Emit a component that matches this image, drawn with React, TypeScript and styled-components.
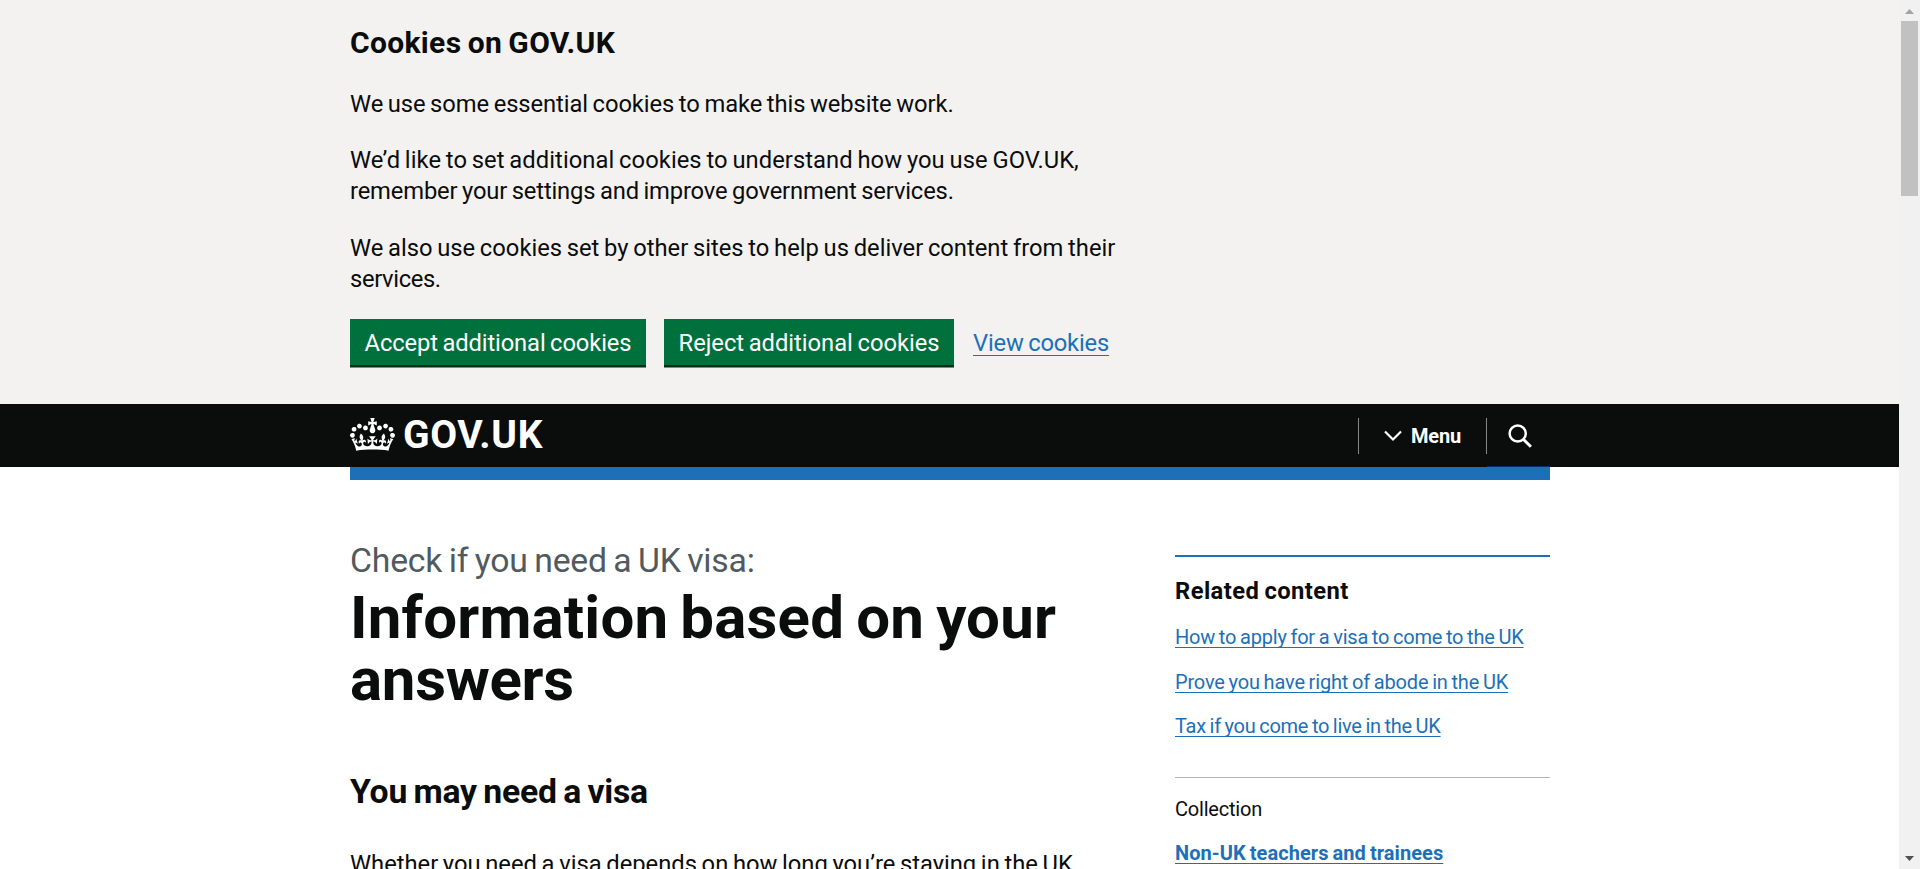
import React from "react";
import styled, { createGlobalStyle } from "styled-components";

const GlobalStyle = createGlobalStyle`
  *, *::before, *::after { box-sizing: border-box; }
  html, body { margin: 0; padding: 0; overflow: hidden; background: #fff; }
  body { font-family: Roboto, "Liberation Sans", sans-serif; color: #0b0c0c; word-spacing: -0.05em; }
  h1, h2, p, ul { margin: 0; padding: 0; }
`;

const Window = styled.div`
  display: flex;
  width: 1920px;
  height: 869px;
  overflow: hidden;
`;

const Page = styled.div`
  width: 1899px;
  height: 869px;
  overflow: hidden;
`;

const Container = styled.div`
  width: 1200px;
  margin-left: 350px;
`;

const Line = styled.span<{ $track: number }>`
  display: block;
  white-space: nowrap;
  letter-spacing: ${(p) => p.$track}px;
  word-spacing: -0.05em;
`;

const Banner = styled.section`
  height: 404px;
  padding-top: 24px;
  background: #f3f2f1;
`;

const BannerTitle = styled.h2`
  margin-bottom: 27.4px;
  font-size: 30px;
  line-height: 37.5px;
  font-weight: 700;
`;

const BodyText = styled.p`
  font-size: 23.75px;
  line-height: 31.25px;
`;

const BannerText = styled(BodyText)`
  margin-bottom: 25px;
`;

const ButtonGroup = styled.div`
  display: flex;
  align-items: flex-start;
  margin-top: -1.2px;
`;

const Button = styled.button<{ $width: number; $track: number }>`
  width: ${(p) => p.$width}px;
  height: 46px;
  margin: 0 18px 0 0;
  padding: 2px 0 0;
  border: 0;
  background: #00703c;
  box-shadow: 0 2.5px 0 #002d18;
  color: #fff;
  font-family: inherit;
  font-size: 23.75px;
  line-height: 44px;
  letter-spacing: ${(p) => p.$track}px;
  word-spacing: -0.05em;
  white-space: nowrap;
`;

const Link = styled.a<{ $track: number; $bold?: boolean }>`
  color: #1d70b8;
  font-weight: ${(p) => (p.$bold ? 700 : 400)};
  letter-spacing: ${(p) => p.$track}px;
  word-spacing: -0.05em;
  white-space: nowrap;
  text-decoration: underline;
  text-decoration-thickness: 1px;
  text-decoration-skip-ink: none;
  text-underline-offset: 3px;
`;

const BannerLink = styled(Link)`
  margin: 9px 0 0 1px;
  font-size: 23.75px;
  line-height: 31.25px;
  text-underline-offset: 4px;
`;

const Header = styled.header`
  height: 63px;
  background: #0b0c0c;
`;

const HeaderRow = styled(Container)`
  display: flex;
  justify-content: space-between;
  height: 63px;
`;

const Logo = styled.a`
  display: flex;
  align-items: flex-start;
  height: 63px;
  color: #fff;
`;

const Crown = styled.svg`
  width: 45px;
  height: 33px;
  margin-top: 14px;
  fill: #fff;
`;

const LogoText = styled.span`
  margin: 11px 0 0 8px;
  font-size: 39px;
  line-height: 40px;
  font-weight: 700;
  letter-spacing: 0.65px;
`;

const HeaderNav = styled.nav`
  display: flex;
  height: 63px;
`;

const Divider = styled.span`
  width: 1px;
  height: 36px;
  margin-top: 14px;
  background: #85888b;
`;

const MenuButton = styled.div`
  display: flex;
  align-items: center;
  gap: 9px;
  width: 127px;
  height: 63px;
  padding: 1px 0 0 25px;
  color: #fff;
  font-size: 20px;
  line-height: 24px;
  font-weight: 700;
  letter-spacing: -0.15px;
`;

const SearchButton = styled.div`
  width: 63px;
  height: 63px;
  padding: 20px 0 0 21px;
  border-bottom: 1px solid #003078;
`;

const StrokeIcon = styled.svg`
  display: block;
  fill: none;
  stroke: #fff;
`;

const BlueBar = styled(Container)`
  height: 13px;
  background: #1d70b8;
`;

const Main = styled(Container)`
  display: flex;
  justify-content: space-between;
`;

const Article = styled.main`
  width: 780px;
  padding-top: 60px;
`;

const Caption = styled.p`
  margin-bottom: 5.4px;
  color: #505a5f;
  font-size: 33.75px;
  line-height: 41.25px;
`;

const Title = styled.h1`
  margin-bottom: 59.6px;
  font-size: 60px;
  line-height: 62.5px;
  font-weight: 700;
`;

const Subtitle = styled.h2`
  margin-bottom: 36.15px;
  font-size: 33.75px;
  line-height: 42px;
  font-weight: 700;
`;

const Related = styled.aside`
  width: 375px;
  margin-top: 75px;
  padding-top: 19.3px;
  border-top: 2px solid #1d70b8;
  font-size: 20px;
  line-height: 25px;
`;

const RelatedTitle = styled.h2`
  margin-bottom: 17.85px;
  font-size: 23.75px;
  line-height: 31.25px;
  font-weight: 700;
`;

const LinkList = styled.ul`
  display: flex;
  flex-direction: column;
  gap: 19.2px;
  list-style: none;

  li { height: 25px; }
`;

const Collection = styled.section`
  margin-top: 38.2px;
  padding-top: 19.4px;
  border-top: 1px solid #b1b4b6;
`;

const CollectionLabel = styled.p`
  margin-bottom: 19px;
  letter-spacing: -0.2px;
`;

const Scrollbar = styled.div`
  display: flex;
  flex-direction: column;
  align-items: center;
  width: 21px;
  height: 869px;
  padding: 9px 0 8px;
  background: #f1f1f1;
`;

const Arrow = styled.svg<{ $color: string }>`
  display: block;
  width: 9px;
  height: 5px;
  fill: ${(p) => p.$color};
`;

const Thumb = styled.div`
  width: 17px;
  height: 175px;
  margin: 7px 0 auto;
  background: #c1c1c1;
`;

const relatedLinks = [
  { text: "How to apply for a visa to come to the UK", track: -0.2 },
  { text: "Prove you have right of abode in the UK", track: -0.17 },
  { text: "Tax if you come to live in the UK", track: -0.26 },
];

const crownPath =
  "M25 30.2c3.5 1.5 7.7-.2 9.1-3.7 1.5-3.6-.2-7.8-3.9-9.2-3.6-1.4-7.6.3-9.1 3.9-1.4 3.5.3 7.5 3.9 9zM9 39.5c3.6 1.5 7.8-.2 9.2-3.7 1.5-3.6-.2-7.8-3.9-9.1-3.6-1.5-7.6.2-9.1 3.8-1.4 3.5.3 7.5 3.8 9zM4.4 57.2c3.5 1.5 7.7-.2 9.1-3.8 1.5-3.6-.2-7.7-3.9-9.1-3.5-1.5-7.6.3-9.1 3.8-1.4 3.5.3 7.6 3.9 9.1zm38.3-21.4c3.5 1.5 7.7-.2 9.1-3.8 1.5-3.6-.2-7.7-3.9-9.1-3.6-1.5-7.6.3-9.1 3.8-1.3 3.6.4 7.7 3.9 9.1zm64.4-5.6c-3.6 1.5-7.8-.2-9.1-3.7-1.5-3.6.2-7.8 3.8-9.2 3.6-1.4 7.7.3 9.2 3.9 1.3 3.5-.4 7.5-3.9 9zm15.9 9.3c-3.6 1.5-7.7-.2-9.1-3.7-1.5-3.6.2-7.8 3.7-9.1 3.6-1.5 7.7.2 9.2 3.8 1.5 3.5-.3 7.5-3.8 9zm4.7 17.7c-3.6 1.5-7.8-.2-9.2-3.8-1.5-3.6.2-7.7 3.9-9.1 3.6-1.5 7.7.3 9.2 3.8 1.3 3.5-.4 7.6-3.9 9.1zM89.3 35.8c-3.6 1.5-7.8-.2-9.2-3.8-1.4-3.6.2-7.7 3.9-9.1 3.6-1.5 7.7.3 9.2 3.8 1.4 3.6-.3 7.7-3.9 9.1zM69.7 17.7l8.9 4.7V9.3l-8.9 2.8c-.2-.3-.5-.6-.9-.9L72.4 0H59.6l3.5 11.2c-.3.3-.6.5-.9.9l-8.8-2.8v13.1l8.8-4.7c.3.3.6.7.9.9l-5 15.4v.1c-.2.8-.4 1.6-.4 2.4 0 4.1 3.1 7.5 7 8.1h.2c.3 0 .7.1 1 .1.4 0 .7 0 1-.1h.2c4-.6 7.1-4.1 7.1-8.1 0-.8-.1-1.7-.4-2.4V34l-5.1-15.4c.4-.2.7-.6 1-.9zM66 92.8c16.9 0 32.8 1.1 47.1 3.2 4-16.9 8.9-26.7 14-33.5l-9.6-3.4c1 4.9 1.1 7.2 0 10.2-1.5-1.4-3-4.3-4.2-8.7L108.6 76c2.8-2 5-3.2 7.5-3.3-4.4 9.4-10 11.9-13.6 11.2-4.3-.8-6.3-4.6-5.6-7.9 1-4.7 5.7-5.9 8-.5 4.3-8.7-3-11.4-7.6-8.8 7.1-7.2 7.9-13.5 2.1-21.1-8 6.1-8.1 12.3-4.5 20.8-4.7-5.4-12.1-2.5-9.5 6.2 3.4-5.2 7.9-2 7.2 3.1-.6 4.3-6.4 7.8-13.5 7.2-10.3-.9-10.9-8-11.2-13.8 2.5-.5 7.1 1.8 11 7.3L80.2 60c-4.1 4.4-8 5.3-12.3 5.4 1.4-4.4 8-11.6 8-11.6H55.5s6.4 7.2 7.9 11.6c-4.2-.1-8-1-12.3-5.4l1.4 16.4c3.9-5.5 8.5-7.7 10.9-7.3-.3 5.8-.9 12.8-11.1 13.8-7.2.6-12.9-2.9-13.5-7.2-.7-5 3.8-8.3 7.1-3.1 2.7-8.7-4.6-11.6-9.4-6.2 3.7-8.5 3.6-14.7-4.6-20.8-5.8 7.6-5 13.9 2.2 21.1-4.7-2.6-11.9.1-7.7 8.8 2.3-5.5 7.1-4.2 8.1.5.7 3.3-1.3 7.1-5.7 7.9-3.5.7-9-1.8-13.5-11.2 2.5.1 4.7 1.3 7.5 3.3l-4.7-15.4c-1.2 4.4-2.7 7.2-4.3 8.7-1.1-3-.9-5.3 0-10.2l-9.5 3.4c5 6.9 9.9 16.7 14 33.5 14.8-2.1 30.8-3.2 47.7-3.2z";

export default function App() {
  return (
    <Window>
      <GlobalStyle />
      <Page>
        <Banner>
          <Container>
            <BannerTitle>
              <Line $track={0.33}>Cookies on GOV.UK</Line>
            </BannerTitle>
            <BannerText>
              <Line $track={-0.08}>We use some essential cookies to make this website work.</Line>
            </BannerText>
            <BannerText>
              <Line $track={0.06}>We’d like to set additional cookies to understand how you use GOV.UK,</Line>
              <Line $track={-0.15}>remember your settings and improve government services.</Line>
            </BannerText>
            <BannerText>
              <Line $track={0}>We also use cookies set by other sites to help us deliver content from their</Line>
              <Line $track={-0.35}>services.</Line>
            </BannerText>
            <ButtonGroup>
              <Button $width={296} $track={-0.13}>Accept additional cookies</Button>
              <Button $width={290} $track={-0.03}>Reject additional cookies</Button>
              <BannerLink $track={-0.18}>View cookies</BannerLink>
            </ButtonGroup>
          </Container>
        </Banner>

        <Header>
          <HeaderRow>
            <Logo>
              <Crown viewBox="0 0 132 97">
                <path d={crownPath} />
              </Crown>
              <LogoText>GOV.UK</LogoText>
            </Logo>
            <HeaderNav>
              <Divider />
              <MenuButton>
                <StrokeIcon width="18" height="12" viewBox="0 0 18 12" strokeWidth="2.2">
                  <path d="M1 1.5L9 9.5L17 1.5" />
                </StrokeIcon>
                Menu
              </MenuButton>
              <Divider />
              <SearchButton>
                <StrokeIcon width="25" height="25" viewBox="0 0 25 25" strokeWidth="2.5">
                  <circle cx="9.7" cy="9.5" r="8.1" />
                  <path d="M15.3 15.3L22.9 22.7" strokeWidth="3" />
                </StrokeIcon>
              </SearchButton>
            </HeaderNav>
          </HeaderRow>
        </Header>
        <BlueBar />

        <Main>
          <Article>
            <Caption>
              <Line $track={-0.2}>Check if you need a UK visa:</Line>
            </Caption>
            <Title>
              <Line $track={0.18}>Information based on your</Line>
              <Line $track={-0.3}>answers</Line>
            </Title>
            <Subtitle>
              <Line $track={-0.24}>You may need a visa</Line>
            </Subtitle>
            <BodyText>
              <Line $track={-0.01}>Whether you need a visa depends on how long you’re staying in the UK</Line>
            </BodyText>
          </Article>

          <Related>
            <RelatedTitle>
              <Line $track={0.43}>Related content</Line>
            </RelatedTitle>
            <LinkList>
              {relatedLinks.map((item) => (
                <li key={item.text}>
                  <Link $track={item.track}>{item.text}</Link>
                </li>
              ))}
            </LinkList>
            <Collection>
              <CollectionLabel>Collection</CollectionLabel>
              <Link $track={0.06} $bold>Non-UK teachers and trainees</Link>
            </Collection>
          </Related>
        </Main>
      </Page>

      <Scrollbar>
        <Arrow $color="#a3a3a3" viewBox="0 0 9 5">
          <path d="M4.5 0L9 5H0Z" />
        </Arrow>
        <Thumb />
        <Arrow $color="#505050" viewBox="0 0 9 5">
          <path d="M0 0H9L4.5 5Z" />
        </Arrow>
      </Scrollbar>
    </Window>
  );
}
